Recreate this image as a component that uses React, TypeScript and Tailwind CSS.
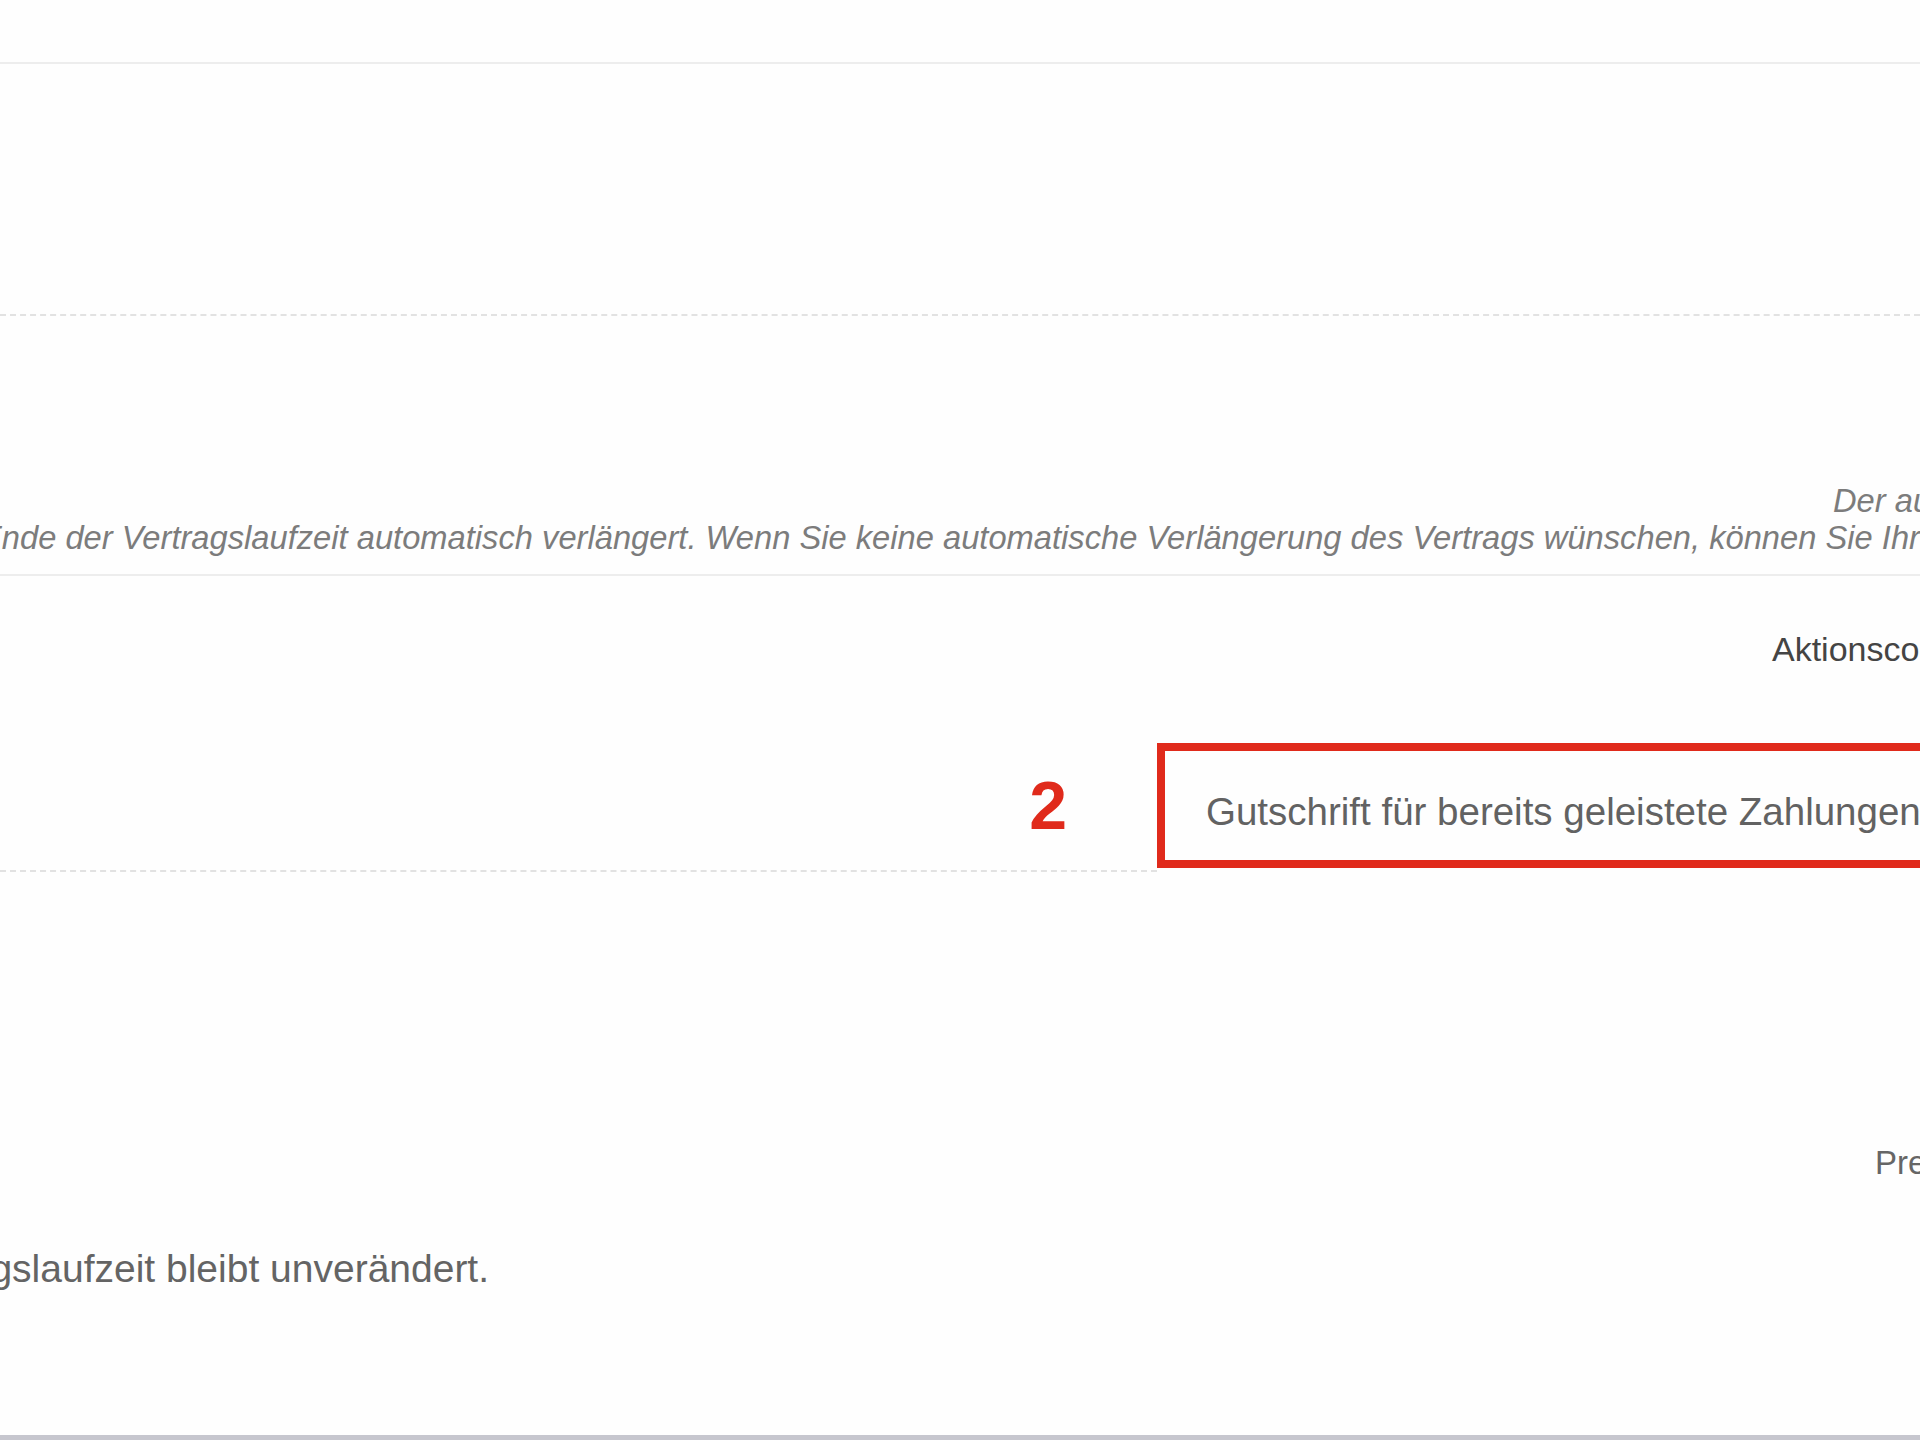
import React from "react";

export default function App() {
  return (
    <div className="w-[1920px] h-[1440px] overflow-hidden bg-[#fefefe] flex flex-col font-['Liberation_Sans',Arial,sans-serif]">
      <div className="h-[62px] shrink-0" />
      <div className="h-[2px] shrink-0 bg-[#ededed]" />
      <div className="mt-[250px] shrink-0 border-t-2 border-dashed border-[#e2e2e2]" />

      <div className="mt-[166px] shrink-0 italic text-[32.7px] leading-[37px] text-[#7c7c7c] whitespace-nowrap">
        <div className="pl-[1833px]">Der automatischen Vertragsverlängerung</div>
        <div className="ml-[-20px]">
          Ende der Vertragslaufzeit automatisch verlängert. Wenn Sie keine automatische Verlängerung des Vertrags wünschen, können Sie Ihren Vertrag kündigen.
        </div>
      </div>

      <div className="mt-[18px] h-[2px] shrink-0 bg-[#ededed]" />

      <div className="mt-[56px] shrink-0 pl-[1772px] text-[34px] leading-none text-[#444444] whitespace-nowrap">
        Aktionscode
      </div>

      <div className="mt-[77px] shrink-0 flex items-start h-[129px]">
        <div className="w-[1157px] shrink-0 h-[129px] border-b-2 border-dashed border-[#e2e2e2] flex justify-end">
          <span className="mt-[28px] mr-[90px] text-[68px] leading-none font-bold text-[#e02a1b]">2</span>
        </div>
        <div className="w-[900px] shrink-0 h-[125px] border-[8px] border-[#e02a1b] pt-[42px] pl-[41px] text-[38.5px] leading-none text-[#626262] whitespace-nowrap overflow-hidden">
          Gutschrift für bereits geleistete Zahlungen
        </div>
      </div>

      <div className="mt-[274px] shrink-0 pl-[1875px] text-[33px] leading-none text-[#666666] whitespace-nowrap">
        Preis
      </div>

      <div className="mt-[70px] shrink-0 ml-[-183px] text-[39px] leading-none text-[#646464] whitespace-nowrap">
        Die Vertragslaufzeit bleibt unverändert.
      </div>

      <div className="flex-1" />
      <div className="h-[5px] shrink-0 bg-[#c6c6ce]" />
    </div>
  );
}
